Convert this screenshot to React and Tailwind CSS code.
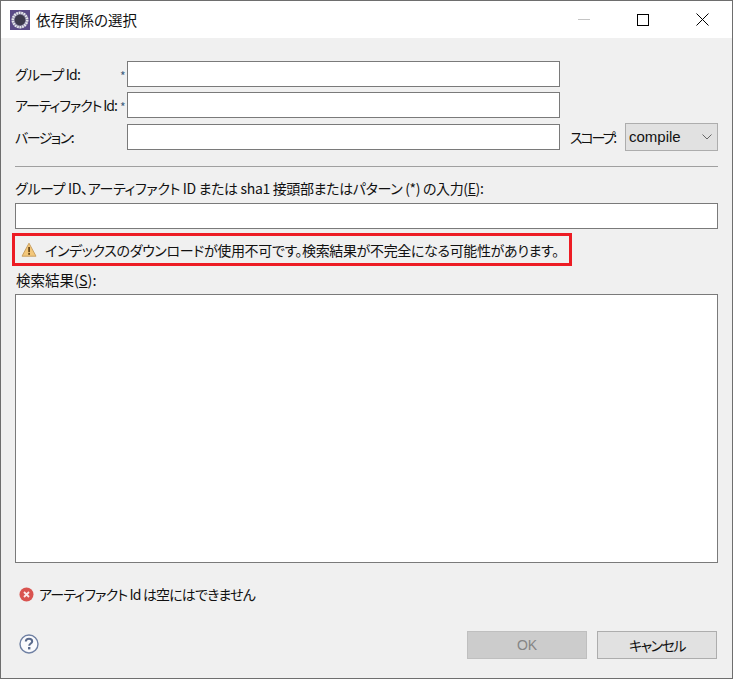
import React from 'react';

const AppIcon = () => (
  <svg width="20" height="20" viewBox="0 0 20 20">
    <rect width="20" height="20" fill="#5a4a86" />
    <circle cx="10" cy="10" r="8.6" fill="#8d88a6" />
    <circle cx="10" cy="10" r="7.2" fill="none" stroke="#e6e6ec" strokeWidth="2.4" strokeDasharray="1.6 0.9" />
    <circle cx="10" cy="10" r="5.4" fill="#3d3a4c" />
  </svg>
);

const WarnIcon = () => (
  <svg className="shrink-0" width="16" height="16" viewBox="0 0 16 16">
    <path d="M8 1.2 L15 14.2 H1 Z" fill="#f3c77a" stroke="#c9a063" strokeWidth="1" strokeLinejoin="round" />
    <rect x="7.2" y="5" width="1.8" height="5.2" fill="#6b4a1c" />
    <rect x="7.2" y="11" width="1.8" height="1.8" fill="#6b4a1c" />
  </svg>
);

const ErrorIcon = () => (
  <svg className="shrink-0" width="15" height="15" viewBox="0 0 15 15">
    <circle cx="7.5" cy="7.5" r="7" fill="#d9534f" />
    <path d="M5 5 L10 10 M10 5 L5 10" stroke="#fbeaea" strokeWidth="1.8" />
  </svg>
);

const HelpIcon = () => (
  <svg className="shrink-0" width="20" height="20" viewBox="0 0 20 20">
    <circle cx="10" cy="10" r="9" fill="#fbfbfd" stroke="#6f80a3" strokeWidth="1.4" />
    <path d="M6.8 7.6 C6.8 5.6 8.3 4.8 10 4.8 C11.9 4.8 13.2 5.8 13.2 7.4 C13.2 9.4 10.2 9.6 10.2 11.8" fill="none" stroke="#5b6b8c" strokeWidth="2" />
    <rect x="9" y="13" width="2.4" height="2.4" fill="#5b6b8c" />
  </svg>
);

const FormRow = ({ label, required, labelClass = '', className = '' }) => (
  <div className={`flex items-center ${className}`}>
    <span className={`w-[105px] shrink-0 whitespace-nowrap ${labelClass}`}>{label}</span>
    <span className="w-[7px] shrink-0 pt-1 text-[12px] leading-none text-[#3f5f80]">{required ? '*' : ''}</span>
    <input className="h-[26px] w-[433px] border border-[#7a7a7a] bg-white" readOnly />
  </div>
);

export default function App() {
  return (
    <div className="flex h-[679px] w-[733px] flex-col overflow-hidden border border-[#6e6e6e] bg-[#f0f0f0] font-['Noto_Sans_CJK_JP','Liberation_Sans',sans-serif] text-[14px] leading-[20px] text-[#111] [font-feature-settings:'palt']">
      {/* title bar */}
      <div className="flex h-[37px] shrink-0 items-center bg-white pl-[9px]">
        <AppIcon />
        <span className="ml-[6px] text-[14.5px]">依存関係の選択</span>
        <div className="ml-auto mr-[7px] flex h-full items-center">
          <span className="flex w-[46px] justify-center"><span className="h-px w-3 bg-[#c4c4c4]" /></span>
          <span className="ml-[13px] flex w-[46px] justify-center"><span className="h-3 w-3 border border-black" /></span>
          <span className="ml-[13px] flex w-[46px] justify-center">
            <svg width="13" height="13" viewBox="0 0 13 13"><path d="M0.5 0.5 L12.5 12.5 M12.5 0.5 L0.5 12.5" stroke="#000" strokeWidth="1" /></svg>
          </span>
        </div>
      </div>

      <div className="flex min-h-0 flex-1 flex-col px-[14px]">
        <FormRow label="グループ Id:" labelClass="tracking-[-0.8px]" required className="mt-[23px]" />
        <FormRow label="アーティファクト Id:" labelClass="tracking-[-1.1px]" required className="mt-[5px]" />
        <div className="mt-[5px] flex items-center">
          <FormRow label="バージョン:" labelClass="tracking-[-1.5px]" />
          <span className="ml-[10px] w-[55px] shrink-0 whitespace-nowrap tracking-[-2.1px]">スコープ:</span>
          <div className="flex h-[28px] w-[93px] items-center justify-between border border-[#adadad] bg-[#e1e1e1] pl-[3px] pr-[5px]">
            <span className="font-['Liberation_Sans',sans-serif] text-[15px]">compile</span>
            <svg width="10" height="6" viewBox="0 0 10 6"><path d="M0.5 0.5 L5 5 L9.5 0.5" fill="none" stroke="#666" strokeWidth="1" /></svg>
          </div>
        </div>

        <div className="mt-[15px] h-px w-[703px] bg-[#a0a0a0]" />

        <div className="mt-[11px] whitespace-nowrap tracking-[-0.35px]">
          グループ ID、アーティファクト ID または sha1 接頭部またはパターン (*) の入力(<span className="underline">E</span>):
        </div>
        <input className="mt-[5px] h-[26px] w-[703px] shrink-0 border border-[#7a7a7a] bg-white" readOnly />

        {/* warning, boxed in red */}
        <div className="-ml-[3px] mt-[4px] flex h-[33px] w-[560px] shrink-0 items-center border-[3px] border-[#ed1c24] pl-[6px]">
          <WarnIcon />
          <span className="ml-[8px] whitespace-nowrap tracking-[-0.35px]">インデックスのダウンロードが使用不可です。検索結果が不完全になる可能性があります。</span>
        </div>

        <div className="mt-[4px] pl-px text-[14.5px]">検索結果(<span className="underline">S</span>):</div>
        <div className="mt-[4px] h-[269px] w-[703px] shrink-0 border border-[#7a7a7a] bg-white" />

        <div className="ml-[4px] mt-[21px] flex items-center">
          <ErrorIcon />
          <span className="ml-[5px] whitespace-nowrap tracking-[-0.85px]">アーティファクト Id は空にはできません</span>
        </div>

        <div className="mt-[27px] flex items-start pl-[4px]">
          <span className="mt-[3px]"><HelpIcon /></span>
          <div className="ml-auto flex gap-[10px] pr-[1px]">
            <button className="h-[28px] w-[120px] border border-[#bfbfbf] bg-[#cccccc] font-['Liberation_Sans',sans-serif] text-[#858585]">OK</button>
            <button className="h-[28px] w-[120px] border border-[#adadad] bg-[#e1e1e1] tracking-[-1.5px]">キャンセル</button>
          </div>
        </div>
      </div>
    </div>
  );
}
